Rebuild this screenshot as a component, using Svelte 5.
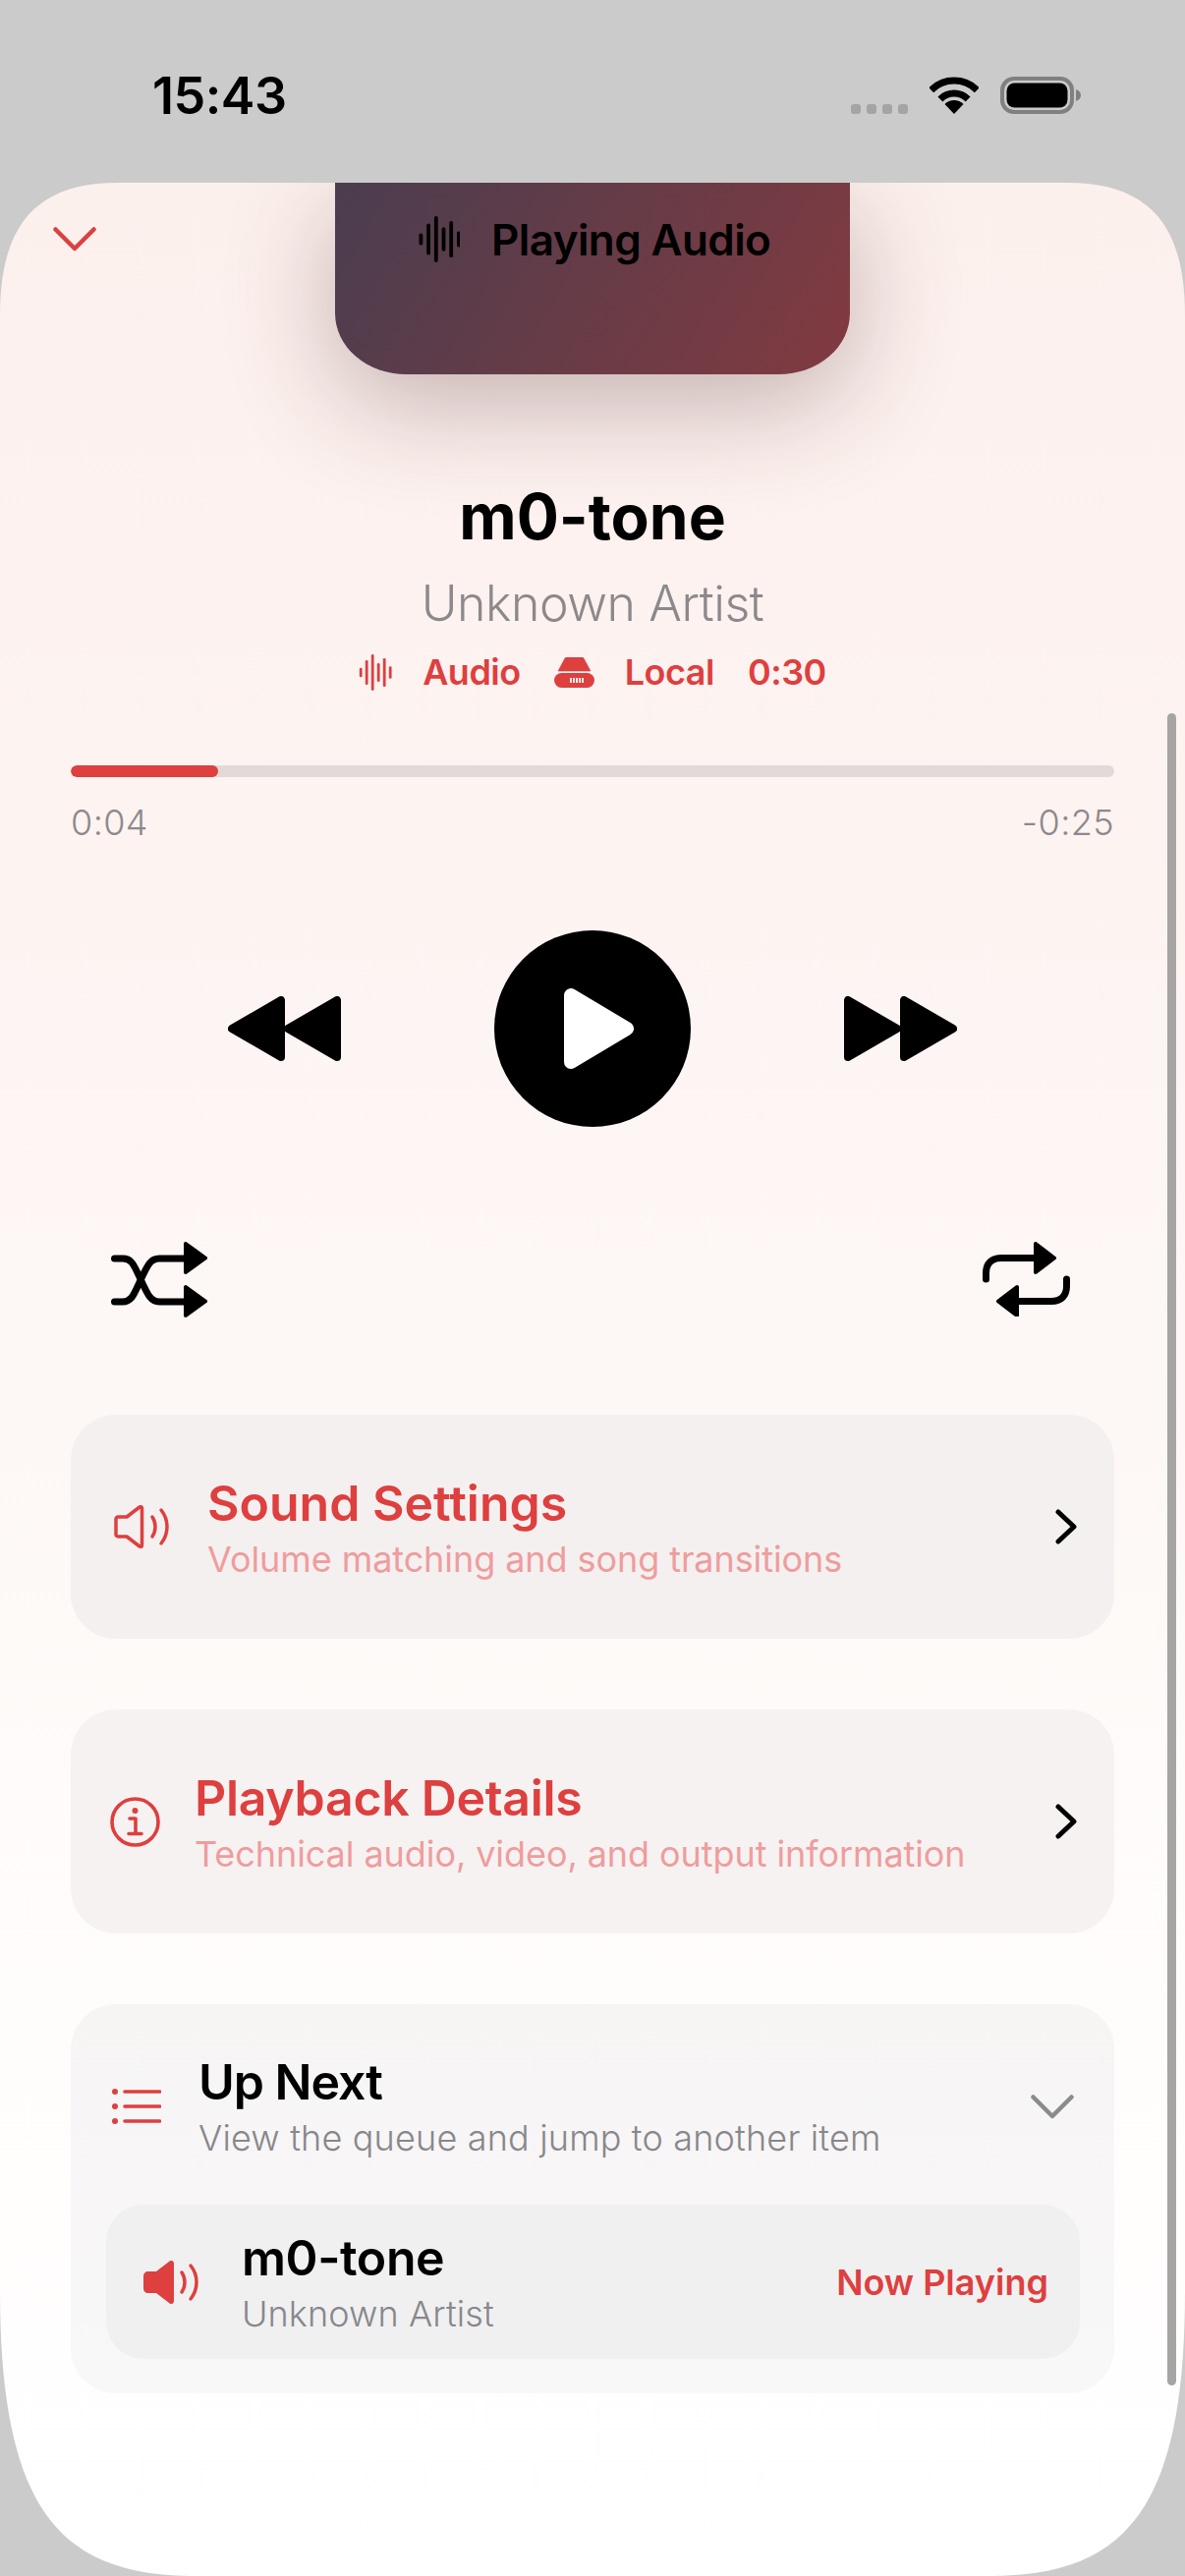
<script>
	const waveLevels = [0.26, 0.68, 1, 0.52, 0.79, 0.34];
</script>

<div class="screen">
	<div class="status">
		<span class="clock">15:43</span>
		<div class="status-icons">
			<div class="dots"><i></i><i></i><i></i><i></i></div>
			<svg width="50" height="38" viewBox="0 0 50 38">
				<path d="M1.7 13.7A33 33 0 0 1 48.3 13.7M10.9 22.9A20 20 0 0 1 39.1 22.9" fill="none" stroke="#000" stroke-width="7" />
				<path d="M25 38L15.5 28A13.4 13.4 0 0 1 34.5 28Z" fill="#000" />
			</svg>
			<svg class="battery" width="82" height="38" viewBox="0 0 82 38">
				<rect x="2" y="2" width="71" height="34" rx="12" fill="none" stroke="#808080" stroke-width="4" />
				<rect x="6.5" y="6.5" width="62" height="25" rx="8" fill="#000" />
				<path d="M77 13c3 1 5 3 5 6s-2 5-5 6z" fill="#808080" />
			</svg>
		</div>
	</div>

	<div class="sheet">
		<div class="scrollbar"></div>

		<header class="top">
			<svg class="close" width="44" height="26" viewBox="0 0 44 26">
				<path d="M2.5 2.5L22 22L41.5 2.5" fill="none" stroke="#de3f3f" stroke-width="4.5" stroke-linecap="round" stroke-linejoin="round" />
			</svg>
			<div class="banner">
				<svg width="42" height="47" viewBox="0 0 42 47">
					{#each waveLevels as l, i}
						<rect x={0.5 + 7.7 * i} y={23.5 - 23.5 * l} width="3.8" height={47 * l} rx="1.9" fill="#000" />
					{/each}
				</svg>
				<span>Playing Audio</span>
			</div>
		</header>

		<h1>m0-tone</h1>
		<p class="artist">Unknown Artist</p>
		<div class="meta">
			<svg width="34" height="37" viewBox="0 0 34 37">
				{#each waveLevels as l, i}
					<rect x={0.8 + 6 * i} y={18.5 - 18.5 * l} width="2.8" height={37 * l} rx="1.4" fill="#de3f3f" />
				{/each}
			</svg>
			<span class="m1">Audio</span>
			<svg class="drive" width="41" height="31" viewBox="0 0 41 31">
				<path d="M10.700 1.500C11 .5 12 0 13 0H28C29 0 30 .5 30.300 1.500L37 14H4Z" fill="#de3f3f" stroke="#de3f3f" stroke-width="0.6" stroke-linejoin="round" />
				<rect x="0" y="16" width="41" height="15" rx="7.500" fill="#de3f3f" />
				<path d="M17 21v5M20 21v5M23 21v5M26 21v5M29 21v5" stroke="#fdf2f0" stroke-width="1.900" />
			</svg>
			<span class="m2">Local</span>
			<span class="m3">0:30</span>
		</div>

		<div class="track"><div class="fill" style="width: {(150 / 1062) * 100}%"></div></div>
		<div class="times"><span>0:04</span><span>-0:25</span></div>

		<div class="controls">
			<svg width="115" height="66" viewBox="0 0 115 66">
				<path d="M111 4V62L61 33ZM54 4V62L4 33Z" fill="#000" stroke="#000" stroke-width="8" stroke-linejoin="round" />
			</svg>
			<div class="play">
				<svg width="200" height="200" viewBox="0 0 200 200">
					<path d="M78 66V134L135 100Z" fill="#fff" stroke="#fff" stroke-width="14" stroke-linejoin="round" />
				</svg>
			</div>
			<svg width="115" height="66" viewBox="0 0 115 66">
				<path d="M4 4V62L54 33ZM61 4V62L111 33Z" fill="#000" stroke="#000" stroke-width="8" stroke-linejoin="round" />
			</svg>
		</div>

		<div class="modes">
			<svg width="98" height="77" viewBox="0 0 98 77">
				<path d="M3.500 17H12C21 17 23 23 30 38S40 61 49 61H76M3.500 61H12C21 61 23 54 30 39S40 17 49 17H76" fill="none" stroke="#000" stroke-width="7" stroke-linecap="round" />
				<path d="M76 2V31L96 16.500ZM76 46V75L96 60.500Z" fill="#000" stroke="#000" stroke-width="4" stroke-linejoin="round" />
			</svg>
			<svg width="89" height="76" viewBox="0 0 89 76">
				<path d="M3.500 38V32C3.500 22 9 16.500 19 16.500H54M85.500 38V45C85.500 55 80 60.500 70 60.500H35" fill="none" stroke="#000" stroke-width="7" stroke-linecap="round" />
				<path d="M54 2V31L73 16.500ZM35 46V75L16 60.500Z" fill="#000" stroke="#000" stroke-width="4" stroke-linejoin="round" />
			</svg>
		</div>

		<div class="card link sound">
			<svg class="ico" width="56" height="44" viewBox="0 0 56 44">
				<path d="M2 14C2 13 3 12 4 12H13L26 2C27.500 1 28.500 2 28.500 3V41C28.500 42 27.500 43 26 42L13 32H4C3 32 2 31 2 30Z" fill="none" stroke="#de3f3f" stroke-width="3.500" stroke-linejoin="round" />
				<path d="M39 12C43 18 43 26 39 32M48 5C56 15 56 29 48 39" fill="none" stroke="#de3f3f" stroke-width="3.500" stroke-linecap="round" />
			</svg>
			<div class="text">
				<div class="name">Sound Settings</div>
				<div class="sub">Volume matching and song transitions</div>
			</div>
			<svg class="go" width="24" height="36" viewBox="0 0 24 36">
				<path d="M4 3L20 18L4 33" fill="none" stroke="#000" stroke-width="5" stroke-linecap="round" stroke-linejoin="round" />
			</svg>
		</div>

		<div class="card link info">
			<svg class="ico" width="51" height="51" viewBox="0 0 51 51">
				<circle cx="25.500" cy="25.500" r="23.500" fill="none" stroke="#de3f3f" stroke-width="3.600" />
				<circle cx="25.500" cy="14" r="3" fill="#de3f3f" />
				<path d="M20 22H26V37M19 37.500H32" fill="none" stroke="#de3f3f" stroke-width="3.600" stroke-linecap="round" stroke-linejoin="round" />
			</svg>
			<div class="text">
				<div class="name">Playback Details</div>
				<div class="sub">Technical audio, video, and output information</div>
			</div>
			<svg class="go" width="24" height="36" viewBox="0 0 24 36">
				<path d="M4 3L20 18L4 33" fill="none" stroke="#000" stroke-width="5" stroke-linecap="round" stroke-linejoin="round" />
			</svg>
		</div>

		<div class="card queue">
			<div class="queue-head">
				<svg class="ico" width="50" height="36" viewBox="0 0 50 36">
					<circle cx="3" cy="3" r="3" fill="#de3f3f" />
					<circle cx="3" cy="18" r="3" fill="#de3f3f" />
					<circle cx="3" cy="33" r="3" fill="#de3f3f" />
					<path d="M13 3H48.500M13 18H48.500M13 33H48.500" stroke="#de3f3f" stroke-width="3.600" stroke-linecap="round" />
				</svg>
				<div class="text">
					<div class="name dark next">Up Next</div>
					<div class="sub grey">View the queue and jump to another item</div>
				</div>
				<svg class="fold" width="44" height="25" viewBox="0 0 44 25">
					<path d="M2.500 2.500L22 22L41.500 2.500" fill="none" stroke="#8b8b8e" stroke-width="4.500" stroke-linecap="round" stroke-linejoin="round" />
				</svg>
			</div>
			<div class="row">
				<svg class="ico" width="56" height="44" viewBox="0 0 56 44">
					<path d="M0 16C0 13 2 11 5 11H13L26 1C28 -1 31 0 31 3V41C31 44 28 45 26 43L13 33H5C2 33 0 31 0 28Z" fill="#de3f3f" />
					<path d="M39 12C43 18 43 26 39 32M48 5C56 15 56 29 48 39" fill="none" stroke="#de3f3f" stroke-width="3.500" stroke-linecap="round" />
				</svg>
				<div class="text">
					<div class="name dark">m0-tone</div>
					<div class="sub artist-sub">Unknown Artist</div>
				</div>
				<span class="now">Now Playing</span>
			</div>
		</div>
	</div>
</div>

<style>
	:global(body) {
		margin: 0;
		background: #cbcbcb;
	}

	.screen {
		width: 1206px;
		height: 2622px;
		overflow: hidden;
		font-family: Inter, "Liberation Sans", sans-serif;
		color: #000;
	}

	.status {
		height: 186px;
		box-sizing: border-box;
		padding: 68px 106px 0 155px;
		display: flex;
		justify-content: space-between;
		align-items: flex-start;
	}

	.clock {
		font-size: 52px;
		line-height: 60px;
		font-weight: 600;
		letter-spacing: -0.5px;
	}

	.status-icons {
		display: flex;
		align-items: flex-end;
		gap: 22px;
		padding-top: 10px;
	}

	.dots {
		display: flex;
		gap: 6px;
	}

	.dots i {
		display: block;
		width: 10px;
		height: 10px;
		border-radius: 3px;
		background: #a4a4a4;
	}

	.sheet {
		position: relative;
		height: 2436px;
		box-sizing: border-box;
		padding: 0 72px;
		overflow: hidden;
		clip-path: path("M120 0H1086C1171 0 1206 45 1206 135V2146C1206 2376 1140 2436 1006 2436H200C66 2436 0 2376 0 2146V135C0 45 35 0 120 0Z");
		background: linear-gradient(180deg, #fcf0ed 0%, #fdf3f1 25%, #fdf8f6 52%, #fffdfc 78%, #ffffff 100%);
	}

	.scrollbar {
		position: absolute;
		top: 540px;
		right: 9px;
		width: 9px;
		height: 1702px;
		border-radius: 5px;
		background: #a6a5a4;
	}

	.top {
		display: grid;
		grid-template-columns: 1fr 524px 1fr;
		margin: 0 -72px;
	}

	.close {
		margin: 45px 0 0 54px;
	}

	.banner {
		height: 195px;
		box-sizing: border-box;
		padding: 0 0 0 85px;
		display: flex;
		gap: 32px;
		align-items: flex-start;
		border-radius: 0 0 72px 72px / 0 0 62px 62px;
		background: linear-gradient(120deg, #4a3d4f 0%, #643c48 45%, #823a40 100%);
		box-shadow: 0 30px 110px rgba(70, 30, 30, 0.3);
	}

	.banner svg {
		margin-top: 34px;
		flex: none;
	}

	.banner span {
		margin-top: 32px;
		font-size: 44px;
		line-height: 52px;
		font-weight: 600;
		letter-spacing: -0.6px;
	}

	h1 {
		margin: 107px 0 0;
		font-size: 64px;
		line-height: 76px;
		font-weight: 700;
		text-align: center;
	}

	.artist {
		margin: 20px 0 0;
		font-size: 50px;
		line-height: 60px;
		font-weight: 300;
		letter-spacing: -0.45px;
		color: #8c898c;
		text-align: center;
	}

	.meta {
		margin-top: 18px;
		height: 44px;
		display: flex;
		justify-content: center;
		align-items: center;
		font-size: 36px;
		line-height: 44px;
		font-weight: 600;
		letter-spacing: -0.5px;
		color: #de3f3f;
	}

	.m1 {
		margin: 0 34px 0 31px;
	}

	.m2 {
		margin: 0 34px 0 31px;
	}

	.track {
		margin-top: 73px;
		height: 12px;
		border-radius: 6px;
		overflow: hidden;
		background: #e2d9d9;
	}

	.fill {
		height: 100%;
		border-radius: 6px;
		background: #de3f3f;
	}

	.times {
		margin-top: 24px;
		display: flex;
		justify-content: space-between;
		font-size: 36px;
		line-height: 44px;
		font-weight: 300;
		letter-spacing: 0.4px;
		color: #8c898c;
	}

	.controls {
		margin-top: 88px;
		display: flex;
		justify-content: center;
		align-items: center;
		gap: 156px;
	}

	.play {
		width: 200px;
		height: 200px;
		border-radius: 50%;
		background: #000;
	}

	.play svg {
		display: block;
	}

	.modes {
		margin-top: 117px;
		height: 78px;
		padding: 0 45px 0 41px;
		display: flex;
		justify-content: space-between;
	}

	.card {
		border-radius: 46px;
		background: #f5f0f0;
		box-sizing: border-box;
	}

	.link {
		height: 228px;
		display: flex;
		align-items: center;
	}

	.link .text {
		padding-top: 2px;
	}

	.sound {
		margin-top: 98px;
		padding: 0 37px 0 44px;
		gap: 39px;
	}

	.info {
		margin-top: 72px;
		padding: 0 37px 0 40px;
		gap: 35px;
		background: #f6f2f2;
	}

	.info .name {
		letter-spacing: -0.3px;
	}

	.ico,
	.go,
	.fold {
		flex: none;
	}

	.text {
		flex: 1;
		min-width: 0;
	}

	.name {
		font-size: 50px;
		line-height: 60px;
		font-weight: 600;
		color: #de3f3f;
	}

	.name.dark {
		letter-spacing: -0.4px;
		color: #000;
	}

	.name.next {
		letter-spacing: -1px;
	}

	.sub {
		margin-top: 4px;
		font-size: 36px;
		line-height: 46px;
		letter-spacing: -0.08px;
		color: #ee9d9e;
	}

	.sub.grey {
		font-weight: 300;
		letter-spacing: 0.17px;
		color: #88878b;
	}

	.sub.artist-sub {
		font-weight: 300;
		letter-spacing: 0.1px;
		color: #88878b;
	}

	.queue {
		margin-top: 72px;
		height: 396px;
		padding: 49px 35px 0 36px;
		background: linear-gradient(180deg, #f6f5f4, #f8f6f7 50%, #f8f8f8);
	}

	.queue-head {
		display: flex;
		align-items: center;
		gap: 38px;
		padding-left: 6px;
	}

	.queue-head .fold {
		margin: 0 6px 0 0;
	}

	.row {
		margin-top: 45px;
		height: 157px;
		box-sizing: border-box;
		padding: 0 32px 0 38px;
		display: flex;
		align-items: center;
		gap: 44px;
		border-radius: 38px;
		background: #f0f0f1;
	}

	.now {
		font-size: 36px;
		font-weight: 600;
		color: #de3f3f;
	}
</style>
